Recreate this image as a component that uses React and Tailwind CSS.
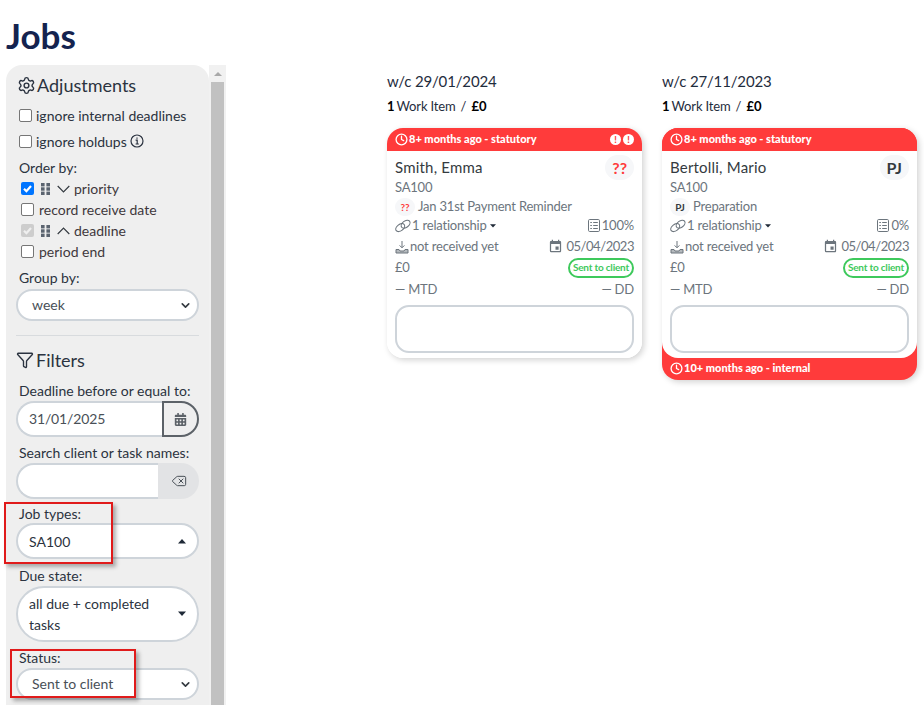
import React from "react";
import { Settings, Funnel, Clock, ChevronDown, Delete } from "lucide-react";
import { FaCalendarAlt } from "react-icons/fa";
import { MdEvent } from "react-icons/md";

const Grip = () => (
  <svg width="9" height="12" viewBox="0 0 9 12" fill="#5b6470" className="shrink-0 ml-[2px]">
    {[0, 4.3, 8.6].map((y) => (
      <g key={y}>
        <rect x="0" y={y} width="3.6" height="3.4" />
        <rect x="5.4" y={y} width="3.6" height="3.4" />
      </g>
    ))}
  </svg>
);

const Chev = ({ up }) => (
  <svg width="13" height="8" viewBox="0 0 13 8" fill="none" stroke="#343a40" strokeWidth="1.2" className="shrink-0 ml-[3px]">
    <path d={up ? "M.7 7L6.5 1.2 12.3 7" : "M.7 1l5.8 5.8L12.3 1"} />
  </svg>
);

const Caret = ({ up, className = "" }) => (
  <svg width="10" height="6" viewBox="0 0 10 6" fill="#1f2937" className={className}>
    <path d={up ? "M1 5.5L5 1l4 4.5z" : "M1 .5L5 5l4-4.5z"} />
  </svg>
);

const Check = ({ state }) => {
  if (state === "on")
    return (
      <span className="w-[13px] h-[13px] rounded-[2px] bg-[#0075ff] flex items-center justify-center shrink-0">
        <svg width="11" height="11" viewBox="0 0 11 11" fill="none" stroke="#fff" strokeWidth="2.2"><path d="M2 5.8l2.4 2.4L9 3" /></svg>
      </span>
    );
  if (state === "disabled")
    return (
      <span className="w-[13px] h-[13px] rounded-[2px] bg-[#cdcdcd] flex items-center justify-center shrink-0">
        <svg width="11" height="11" viewBox="0 0 11 11" fill="none" stroke="#efefef" strokeWidth="2.2"><path d="M2 5.8l2.4 2.4L9 3" /></svg>
      </span>
    );
  return <span className="w-[13px] h-[13px] rounded-[2px] border border-[#767676] bg-white shrink-0" />;
};

const Label = ({ children, className = "" }) => (
  <div className={`text-[14px] leading-[20px] text-[#2b3340] pl-[13px] ${className}`}>{children}</div>
);

const CheckRow = ({ state, children, className = "" }) => (
  <div className={`h-[21px] flex items-center pl-[15px] text-[14px] text-[#40383c] ${className}`}>
    <Check state={state} />
    <span className="ml-[5px] flex items-center gap-[4px]">{children}</span>
  </div>
);

const PillSelect = ({ value, caret, tall, dim }) => (
  <div className={`mx-[10px] rounded-[28px] border-2 border-[#ced4da] bg-white flex items-center justify-between ${tall ? "h-[56px]" : dim ? "h-[32px]" : "h-[36px]"} ${dim ? "pl-[14px] pr-[5px]" : "pl-[11px] pr-[10px]"}`}>
    <span className={`text-[14px] ${tall ? "leading-[21px] w-[130px] text-[#2b3340]" : ""} ${dim ? "text-[#495057] mt-[-1px]" : "text-[#2b3340]"}`}>{value}</span>
    {caret === "chev" ? <ChevronDown size={13} strokeWidth={3} color="#343a40" /> : <Caret up={caret === "up"} />}
  </div>
);

const LinkIcon = () => (
  <svg width="16" height="14" viewBox="0 0 16 14" fill="none" stroke="#6c757d" strokeWidth="1.1" className="shrink-0">
    <ellipse cx="5.2" cy="8.6" rx="5" ry="3.2" transform="rotate(-38 5.2 8.6)" />
    <ellipse cx="10.6" cy="5.2" rx="5" ry="3.2" transform="rotate(-38 10.6 5.2)" />
  </svg>
);

const ReceiveIcon = () => (
  <svg width="14" height="14" viewBox="0 0 14 14" fill="none" stroke="#6c757d" strokeWidth="1" className="shrink-0">
    <path d="M7 1v6.5M4.6 5.4L7 7.8l2.4-2.4" />
    <path d="M1 9.5h3l1 1.5h4l1-1.5h3v3.5H1z" fill="#b4b9bd" />
  </svg>
);

const ListIcon = () => (
  <svg width="12" height="13" viewBox="0 0 12 13" fill="none" stroke="#6c757d" strokeWidth="1" className="shrink-0">
    <rect x=".5" y=".5" width="11" height="12" rx="1.2" />
    <path d="M2.3 3.5h1.6M5.2 3.5h4.6M2.3 6.5h1.6M5.2 6.5h4.6M2.3 9.5h1.6M5.2 9.5h4.6" />
  </svg>
);

const Bubble = ({ children, red, small }) => (
  <span className={`rounded-full bg-[#f6f7f9] flex items-center justify-center font-bold shrink-0 tracking-normal ${small ? "w-[20px] h-[18px] text-[10px]" : "h-[25px] text-[16px] px-[7px]"} ${red ? "text-[#ff3b3b]" : "text-[#343a40]"}`}>
    {children}
  </span>
);

const Card = ({ week, name, badge, red, task, pct, alerts, footer }) => (
  <div className="w-[255px]">
    <div className="text-[15px] leading-[20px] h-[20px] mt-[6px] text-[#1f2d3d] tracking-[-0.15px]">{week}</div>
    <div className="text-[13px] leading-[18px] mt-[6px] text-[#1f2d3d] flex items-center">
      <b className="font-bold text-black">1</b>
      <span className="ml-[2px] tracking-[-0.15px]">Work Item</span>
      <span className="mx-[5px]">/</span>
      <b className="font-bold text-black">£0</b>
    </div>
    <div className={`mt-[13px] rounded-[16px] shadow-[2px_2px_6px_rgba(0,0,0,0.18)] overflow-hidden ${footer ? "bg-[#ff3b3b]" : "bg-white"}`}>
      <div className="h-[23px] bg-[#ff3b3b] text-white text-[11px] font-black flex items-center pl-[8px] pr-[8px]">
        <Clock size={13} strokeWidth={2.4} />
        <span className="ml-[1px] flex-1">8+ months ago - statutory</span>
        {alerts && (
          <span className="flex gap-[2px]">
            <span className="w-[11px] h-[11px] rounded-full bg-white text-[#ff3b3b] text-[9px] leading-[11px] text-center">!</span>
            <span className="w-[11px] h-[11px] rounded-full bg-white text-[#ff3b3b] text-[9px] leading-[11px] text-center">!</span>
          </span>
        )}
      </div>
      <div className={`bg-white px-[8px] pb-[5px] text-[#6c757d] text-[13px] tracking-[-0.2px] ${footer ? "rounded-b-[16px]" : ""}`}>
        <div className="flex justify-between items-center pt-[4px] h-[29px]">
          <span className="text-[15px] text-[#343a40] tracking-[0.2px]">{name}</span>
          <Bubble red={red}>{badge}</Bubble>
        </div>
        <div className="h-[19px] leading-[19px] mt-[-2px]">SA100</div>
        <div className="h-[18px] pt-[2px] flex items-center">
          <Bubble red={red} small>{red ? "??" : "PJ"}</Bubble>
          <span className="ml-[3px]">{task}</span>
        </div>
        <div className="h-[21px] flex items-center justify-between">
          <span className="flex items-center gap-[1px]"><LinkIcon />1 relationship<Caret className="ml-[0px] scale-[0.75]" /></span>
          <span className="flex items-center gap-[2px]"><ListIcon />{pct}</span>
        </div>
        <div className="h-[21px] flex items-center justify-between">
          <span className="flex items-center gap-[1px]"><ReceiveIcon />not received yet</span>
          <span className="flex items-center gap-[3px]"><MdEvent size={15} color="#6c757d" /><span className="tracking-[-0.45px]">05/04/2023</span></span>
        </div>
        <div className="h-[21px] flex items-center justify-between">
          <span>£0</span>
          <span className="h-[20px] rounded-full border-2 border-[#3ec95c] text-[#3ec95c] font-bold text-[10px] tracking-[-0.2px] flex items-center px-[3px]">Sent to client</span>
        </div>
        <div className="h-[21px] mt-[1px] flex items-center justify-between">
          <span>— MTD</span>
          <span>— DD</span>
        </div>
        <div className="h-[48px] mt-[5px] rounded-[14px] border-2 border-[#ced4da] bg-white" />
      </div>
      {footer && (
        <div className="h-[22px] text-white text-[11px] font-black flex items-center pl-[8px] pb-[2px]">
          <Clock size={13} strokeWidth={2.4} />
          <span className="ml-[1px]">{footer}</span>
        </div>
      )}
    </div>
  </div>
);

const Highlight = ({ className }) => (
  <div className={`absolute border-2 border-[#e01b1b] shadow-[3px_3px_4px_rgba(0,0,0,0.3)] ${className}`} />
);

export default function App() {
  return (
    <div className="relative w-[924px] h-[705px] overflow-hidden bg-white font-['Lato','Liberation_Sans',sans-serif]">
      <h1 className="h-[65px] pl-[6px] pt-[14px] text-[35px] leading-[43px] font-bold text-[#14234f]">Jobs</h1>
      <div className="flex h-[640px] items-start">
        <aside className="ml-[6px] w-[203px] h-[640px] bg-[#efefef] rounded-t-[16px] shrink-0 overflow-hidden">
          <div className="flex items-center pl-[10px] pt-[9px] h-[31px] text-[18px] text-[#2b3340]">
            <Settings size={19} strokeWidth={1.8} className="ml-[1px]" />
            <span className="ml-[1px]">Adjustments</span>
          </div>
          <div className="mt-[6px] h-[26px] flex items-center pl-[13px] text-[14px] text-[#2b3340]">
            <Check />
            <span className="ml-[4px]">ignore internal deadlines</span>
          </div>
          <div className="h-[26px] flex items-center pl-[13px] text-[14px] text-[#2b3340]">
            <Check />
            <span className="ml-[4px]">ignore holdups</span>
            <svg width="14" height="14" viewBox="0 0 14 14" fill="none" stroke="#2b3340" className="ml-[3px]">
              <circle cx="7" cy="7" r="6" strokeWidth="1.2" />
              <path d="M5.6 6.2H7.2V10M5.6 10h3.2M7 3.6v1.2" strokeWidth="1.2" />
            </svg>
          </div>
          <Label className="mt-[4px] h-[20px]">Order by:</Label>
          <CheckRow state="on"><Grip /><Chev />priority</CheckRow>
          <CheckRow>record receive date</CheckRow>
          <CheckRow state="disabled"><Grip /><Chev up />deadline</CheckRow>
          <CheckRow>period end</CheckRow>
          <Label className="mt-[6px]">Group by:</Label>
          <div className="mt-[1px]"><PillSelect value="week" caret="chev" dim /></div>
          <div className="mx-[10px] mt-[14px] border-t border-[#d8dbde]" />
          <div className="flex items-center pl-[10px] mt-[12px] h-[24px] text-[18px] text-[#2b3340]">
            <Funnel size={18} strokeWidth={1.8} />
            <span className="ml-[2px]">Filters</span>
          </div>
          <Label className="mt-[9px]">Deadline before or equal to:</Label>
          <div className="mx-[10px] h-[36px] flex">
            <div className="flex-1 rounded-l-[18px] border-2 border-r-0 border-[#ced4da] bg-white pl-[11px] pb-[1px] flex items-center text-[14px] text-[#495057] tracking-[-0.15px]">31/01/2025</div>
            <div className="w-[37px] rounded-r-[18px] border-2 border-[#5c6268] flex items-center justify-center bg-[#efefef]">
              <FaCalendarAlt size={13} color="#5c6268" />
            </div>
          </div>
          <Label className="mt-[6px]">Search client or task names:</Label>
          <div className="mx-[10px] h-[36px] flex">
            <div className="flex-1 rounded-l-[18px] border-2 border-r-0 border-[#ced4da] bg-white" />
            <div className="w-[41px] rounded-r-[18px] bg-[#e2e3e5] flex items-center justify-center">
              <Delete size={16} strokeWidth={1.5} color="#495057" />
            </div>
          </div>
          <Label className="mt-[5px]">Job types:</Label>
          <div className="mt-[-1px]"><PillSelect value="SA100" caret="up" /></div>
          <Label className="mt-[7px]">Due state:</Label>
          <PillSelect value="all due + completed tasks" caret="down" tall />
          <Label className="mt-[6px]">Status:</Label>
          <PillSelect value="Sent to client" caret="chev" dim />
        </aside>
        <div className="w-[17px] h-[640px] bg-[#f1f1f1] flex flex-col items-center shrink-0">
          <svg width="10" height="6" viewBox="0 0 10 6" fill="#a8a8a8" className="mt-[6px]"><path d="M1 5L5 1l4 4z" /></svg>
          <div className="mt-[5px] w-[13px] flex-1 bg-[#c1c1c1]" />
        </div>
        <main className="ml-[161px] flex gap-[20px] items-start">
          <Card week="w/c 29/01/2024" name="Smith, Emma" badge="??" red task="Jan 31st Payment Reminder" pct="100%" alerts />
          <Card week="w/c 27/11/2023" name="Bertolli, Mario" badge="PJ" task="Preparation" pct="0%" footer="10+ months ago - internal" />
        </main>
      </div>
      <Highlight className="left-[4px] top-[502px] w-[109px] h-[62px]" />
      <Highlight className="left-[10px] top-[649px] w-[126px] h-[49px]" />
    </div>
  );
}
